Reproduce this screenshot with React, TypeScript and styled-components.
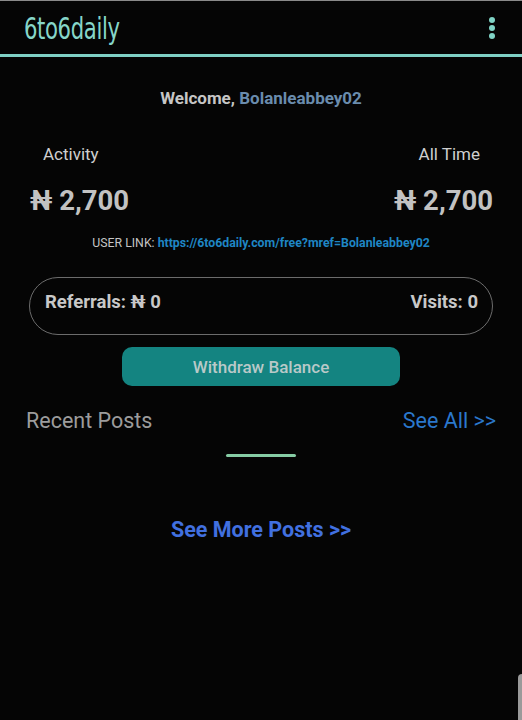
import React from 'react';
import styled, { createGlobalStyle } from 'styled-components';

const GlobalStyle = createGlobalStyle`
  html, body {
    margin: 0;
    padding: 0;
    background: #050505;
    font-family: Roboto, "Liberation Sans", sans-serif;
  }
`;

const Page = styled.div`
  min-height: 720px;
  background: #050505;
  border-top: 1px solid #8a8a8a;
  box-sizing: border-box;
`;

const Header = styled.header`
  height: 53px;
  display: flex;
  align-items: center;
  justify-content: space-between;
  padding: 0 24px;
  border-bottom: 3px solid #7fd0c4;
`;

const Logo = styled.div`
  font-family: "DejaVu Sans Condensed", "Liberation Sans Narrow", sans-serif;
  font-stretch: condensed;
  font-size: 31px;
  color: #86d6c9;
  letter-spacing: -0.5px;
  transform: scaleX(0.76);
  transform-origin: left center;
  margin-top: 1px;
`;

const Kebab = styled.div`
  display: flex;
  flex-direction: column;
  gap: 2px;
  margin-right: 3px;
  span {
    width: 6px;
    height: 6px;
    border-radius: 50%;
    background: #80d4c6;
  }
`;

const Welcome = styled.div`
  text-align: center;
  font-weight: 700;
  font-size: 17px;
  color: #c6c6c6;
  margin-top: 31px;
  span {
    color: #6a8cad;
  }
`;

const Stats = styled.div`
  display: flex;
  justify-content: space-between;
  padding: 0 29px 0 30px;
  margin-top: 36px;
`;

const Stat = styled.div<{ $align: 'left' | 'right' }>`
  display: flex;
  flex-direction: column;
  align-items: ${(p) => (p.$align === 'left' ? 'flex-start' : 'flex-end')};
`;

const StatLabel = styled.div<{ $align: 'left' | 'right' }>`
  font-size: 17px;
  color: #cfcfcf;
  ${(p) => (p.$align === 'left' ? 'padding-left: 13px;' : 'padding-right: 13px;')}
`;

const StatValue = styled.div`
  font-size: 27.5px;
  font-weight: 700;
  color: #c2c2c2;
  margin-top: 20px;
`;

const UserLink = styled.div`
  text-align: center;
  font-size: 12.3px;
  color: #c4c4c4;
  margin-top: 19px;
  a {
    color: #1f86c4;
    font-weight: 700;
    text-decoration: none;
  }
`;

const PillBox = styled.div`
  margin: 27px 29px 0;
  height: 58px;
  box-sizing: border-box;
  border: 1px solid #6c6c6c;
  border-radius: 29px;
  display: flex;
  align-items: center;
  justify-content: space-between;
  padding: 0 14px 8px 15px;
  font-size: 18.5px;
  font-weight: 700;
  color: #c8c8c8;
`;

const WithdrawButton = styled.button`
  display: block;
  margin: 12px auto 0;
  width: 278px;
  height: 39px;
  background: #148481;
  border: none;
  border-radius: 10px;
  font-family: Roboto, "Liberation Sans", sans-serif;
  font-size: 17px;
  font-weight: 500;
  color: #b9c9c8;
`;

const SectionHead = styled.div`
  display: flex;
  justify-content: space-between;
  align-items: center;
  padding: 0 26px;
  margin-top: 22px;
  font-size: 21.5px;
`;

const SectionTitle = styled.div`
  color: #9c9c9c;
`;

const SeeAll = styled.a`
  color: #2b78cc;
  text-decoration: none;
`;

const Loader = styled.div`
  width: 70px;
  height: 3px;
  border-radius: 2px;
  background: #86cca4;
  margin: 21px auto 0;
`;

const MoreLink = styled.a`
  display: block;
  text-align: center;
  margin-top: 60px;
  font-size: 21.5px;
  font-weight: 700;
  color: #4170e0;
  text-decoration: none;
`;

const ScrollNub = styled.div`
  position: fixed;
  right: 0;
  bottom: 0;
  width: 4px;
  height: 46px;
  border-radius: 4px 0 0 0;
  background: #9a9a9a;
`;

export default function App() {
  return (
    <>
      <GlobalStyle />
      <Page>
        <Header>
          <Logo>6to6daily</Logo>
          <Kebab>
            <span />
            <span />
            <span />
          </Kebab>
        </Header>
        <Welcome>
          Welcome, <span>Bolanleabbey02</span>
        </Welcome>
        <Stats>
          <Stat $align="left">
            <StatLabel $align="left">Activity</StatLabel>
            <StatValue>₦ 2,700</StatValue>
          </Stat>
          <Stat $align="right">
            <StatLabel $align="right">All Time</StatLabel>
            <StatValue>₦ 2,700</StatValue>
          </Stat>
        </Stats>
        <UserLink>
          USER LINK: <a href="#">https://6to6daily.com/free?mref=Bolanleabbey02</a>
        </UserLink>
        <PillBox>
          <span>Referrals: ₦ 0</span>
          <span>Visits: 0</span>
        </PillBox>
        <WithdrawButton>Withdraw Balance</WithdrawButton>
        <SectionHead>
          <SectionTitle>Recent Posts</SectionTitle>
          <SeeAll href="#">See All &gt;&gt;</SeeAll>
        </SectionHead>
        <Loader />
        <MoreLink href="#">See More Posts &gt;&gt;</MoreLink>
      </Page>
      <ScrollNub />
    </>
  );
}
